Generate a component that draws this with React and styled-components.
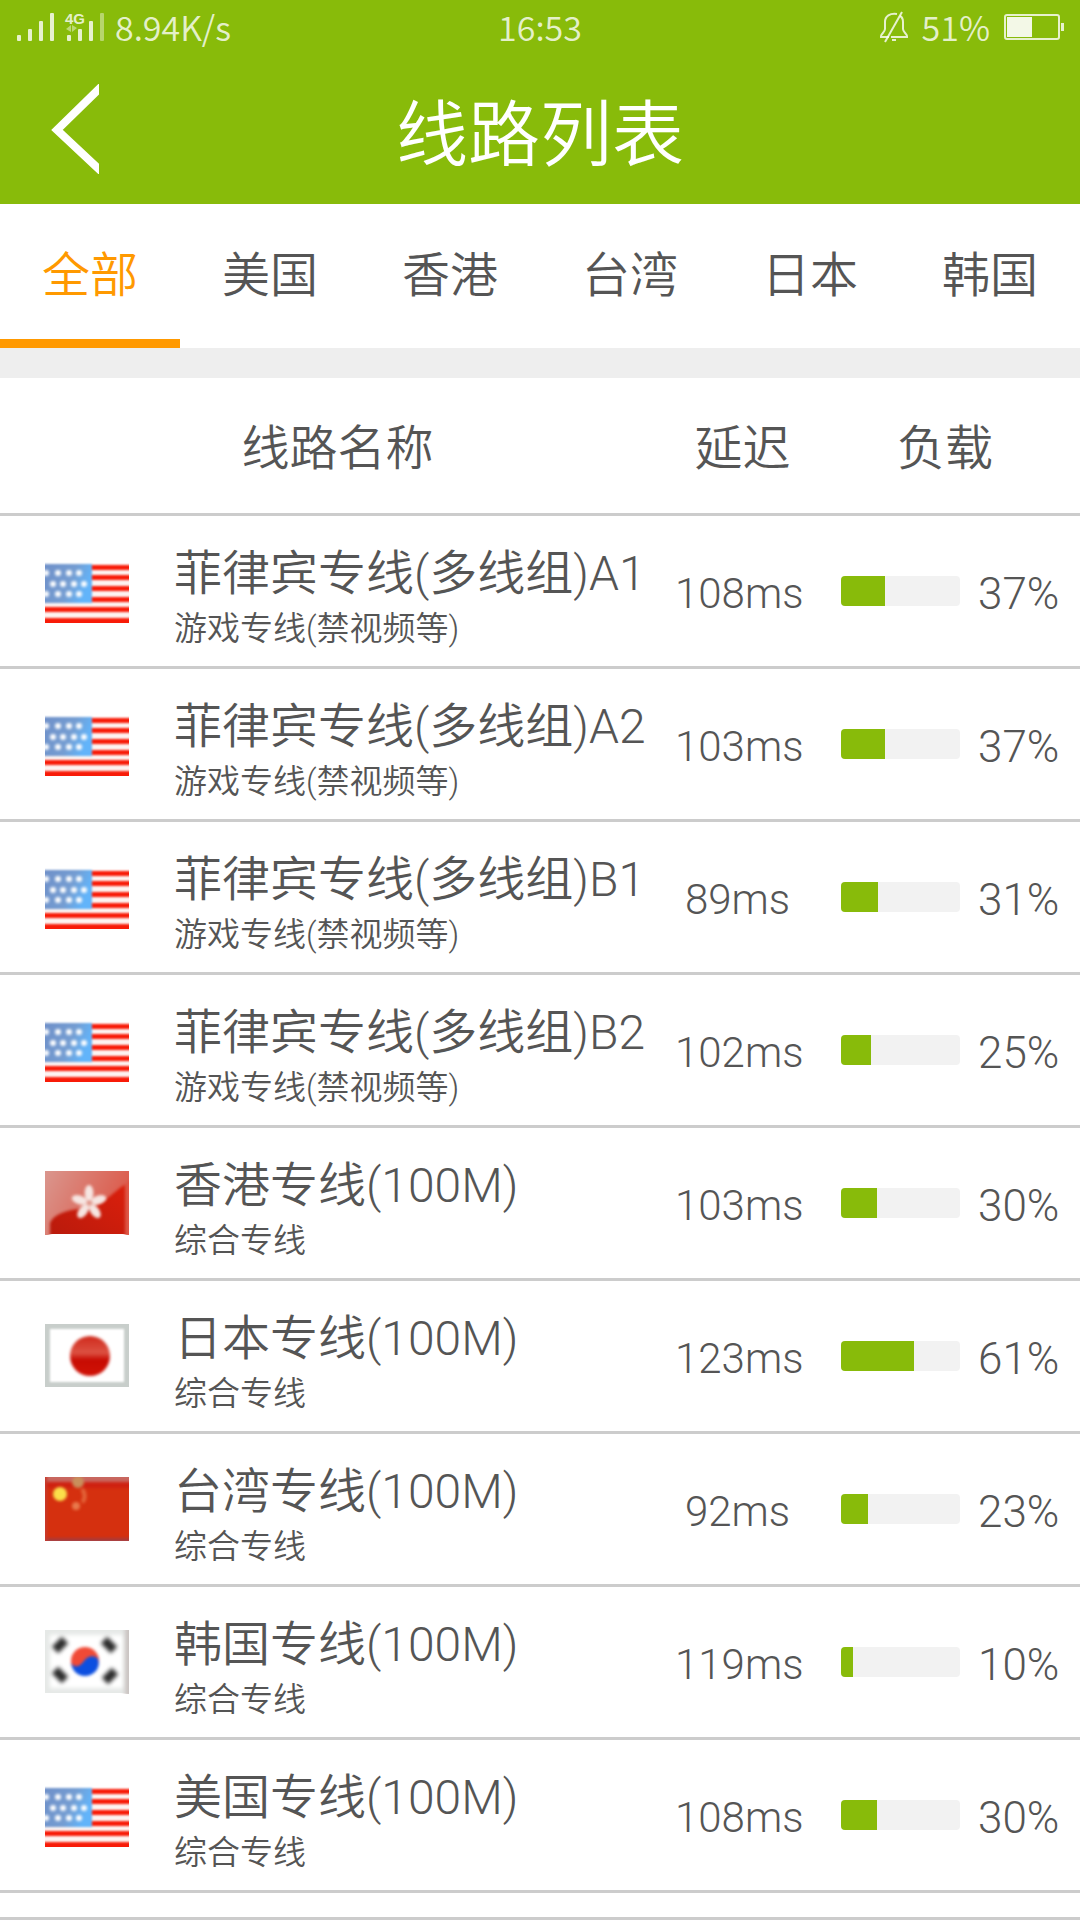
import React, { useId, useState } from "react"
import styled, { createGlobalStyle } from "styled-components"

const latin = `Roboto, "Noto Sans CJK SC", sans-serif`

const GlobalStyle = createGlobalStyle`
  * {
    box-sizing: border-box;
  }
  body {
    margin: 0;
    background: #fff;
    color: #555;
    font-family: "Noto Sans CJK SC", "Noto Sans", sans-serif;
    font-weight: 350;
  }
  button {
    font: inherit;
    color: inherit;
    background: none;
    border: 0;
    padding: 0;
    cursor: pointer;
  }
`

const Header = styled.header`
  background: #88bb0a;
  color: #fff;
`

const StatusBar = styled.div`
  display: grid;
  grid-template-columns: 1fr auto 1fr;
  align-items: center;
  height: 54px;
  padding: 0 16px;
  font-size: 34px;
  line-height: 54px;
  color: rgba(255, 255, 255, 0.8);
`

const StatusGroup = styled.div`
  display: flex;
  align-items: center;
  gap: ${(props) => props.gap};
  justify-content: ${(props) => props.end ? 'flex-end' : 'flex-start'};
`

const TitleBar = styled.div`
  display: grid;
  grid-template-columns: 150px 1fr 150px;
  align-items: center;
  height: 150px;
`

const BackButton = styled.button`
  display: flex;
  align-items: center;
  height: 150px;
  padding-left: 51px;
`

const PageTitle = styled.h1`
  margin: 0;
  font-size: 72px;
  line-height: 148px;
  font-weight: 350;
  text-align: center;
`

const Tabs = styled.nav`
  display: flex;
  border-bottom: 30px solid #eee;
`

const Tab = styled.button`
  flex: 1;
  height: 144px;
  padding-bottom: 2px;
  font-size: 48px;
  line-height: 72px;
  color: ${(props) => props.$active ? '#ff9900' : '#555'};
  border-bottom: 9px solid ${(props) => props.$active ? '#ff9900' : 'transparent'};
`

const LineTable = styled.table`
  width: 100%;
  table-layout: fixed;
  border-collapse: separate;
  border-spacing: 0;
`

const HeadCell = styled.th`
  width: ${(props) => props.width};
  height: 138px;
  padding: 0 0 4px;
  border-bottom: 3px solid #ccc;
  font-size: 48px;
  line-height: 72px;
  font-weight: 350;
`

const Cell = styled.td`
  height: 153px;
  padding: 0;
  border-bottom: 3px solid #ccc;
  font-family: ${latin};
`

const LineInfo = styled.div`
  display: flex;
  align-items: center;
  gap: 45px;
  padding-left: 45px;
  white-space: nowrap;
`

const LineText = styled.div`
  padding-top: 16px;
`

const LineName = styled.div`
  font-size: 48px;
  line-height: 60px;
`

const LineNote = styled.div`
  font-size: 33px;
  line-height: 50px;
`

const Latency = styled.div`
  padding: 6px 10px 0 0;
  font-size: 42px;
  line-height: 60px;
  text-align: center;
`

const Load = styled.div`
  display: flex;
  align-items: center;
  gap: 18px;
  padding-left: 31px;
`

const LoadValue = styled.span`
  padding-top: 6px;
  font-size: 44px;
  line-height: 60px;
`

const Track = styled.div`
  width: 119px;
  height: 30px;
  border-radius: 4px;
  background: #f2f2f2;
  overflow: hidden;
`

const Fill = styled.div`
  height: 100%;
  background: #88bb0a;
`

const ListEnd = styled.div`
  height: 27px;
  border-bottom: 3px solid #ccc;
`

const FlagSvg = styled.svg`
  display: block;
  flex: none;
`

const Soft = styled.g`
  filter: blur(${(props) => props.$radius || '1px'});
`

const Flag = ({ label, children }) => (
  <FlagSvg width="84" height="64" viewBox="0 0 84 64" role="img" aria-label={label}>
    {children}
  </FlagSvg>
)

const UsFlag = () => {
  const id = useId()
  const stars = [
    [1, 14], [13, 14], [24, 14], [34, 14],
    [8, 25], [18, 25], [29, 25], [39, 25],
    [1, 35], [13, 35], [24, 35], [34, 35],
  ]
  return (
    <Flag label="US">
      <defs>
        <linearGradient id={id} x1="0" x2="1" y1="0" y2="0.3">
          <stop offset="0" stopColor="#6f8fc8" />
          <stop offset="0.65" stopColor="#749dd2" />
          <stop offset="1" stopColor="#62b4fa" />
        </linearGradient>
      </defs>
      <Soft>
        <rect x="-4" y="5" width="92" height="64" fill="#fdf3f1" />
        {[9, 19, 30, 41, 51, 62].map((y) => (
          <rect key={y} x="-4" y={y - 3} width="92" height="5" fill="#f81b08" />
        ))}
        <rect x="-4" y="62" width="92" height="6" fill="#f81b08" />
        <rect x="-4" y="5" width="51" height="39" fill={`url(#${id})`} />
      </Soft>
      <Soft $radius="1.5px">
        {stars.map(([x, y]) => <circle key={`${x}-${y}`} cx={x} cy={y} r="3" fill="#fff" />)}
      </Soft>
    </Flag>
  )
}

const HkFlag = () => (
  <Flag label="HK">
    <defs>
      <linearGradient id="hk-base" x1="0" x2="1" y1="1" y2="0">
        <stop offset="0" stopColor="#b81a0c" />
        <stop offset="1" stopColor="#e0200c" />
      </linearGradient>
      <linearGradient id="hk-shine" x1="0" x2="1" y1="0" y2="0.4">
        <stop offset="0" stopColor="#d99a92" />
        <stop offset="1" stopColor="#dc5646" />
      </linearGradient>
    </defs>
    <rect width="84" height="63" fill="url(#hk-base)" />
    <Soft $radius="1.5px">
      <path d="M-4-4H88V10C70 16 62 34 40 37C20 39 8 44 5 52V68H-4Z" fill="url(#hk-shine)" />
      <rect x="80" y="12" width="8" height="56" fill="#dd5747" />
    </Soft>
    <Soft $radius="1.6px">
      {[0, 72, 144, 216, 288].map((angle) => (
        <ellipse key={angle} cx="44" cy="22" rx="4.4" ry="8" fill="#f6e6e2" transform={`rotate(${angle} 44 32)`} />
      ))}
      <circle cx="45" cy="32" r="2.5" fill="#e0988c" />
    </Soft>
  </Flag>
)

const JpFlag = () => (
  <Flag label="JP">
    <defs>
      <linearGradient id="jp-sun" x1="0" x2="0" y1="0" y2="1">
        <stop offset="0" stopColor="#cf2a1c" />
        <stop offset="0.42" stopColor="#dc5142" />
        <stop offset="0.6" stopColor="#c70b02" />
        <stop offset="1" stopColor="#d01206" />
      </linearGradient>
    </defs>
    <rect width="84" height="63" fill="#c8cecb" />
    <Soft>
      <rect x="5" y="5" width="74" height="53" fill="#fff" />
    </Soft>
    <Soft $radius="1.6px">
      <circle cx="45" cy="32" r="20" fill="url(#jp-sun)" />
    </Soft>
  </Flag>
)

const CnFlag = () => (
  <Flag label="CN">
    <rect width="84" height="63" fill="#d5300f" />
    <Soft $radius="1.6px">
      <rect x="-4" y="-4" width="92" height="9" fill="#c8675f" />
      <rect x="-4" y="5" width="92" height="6" fill="#cf2110" />
      <rect x="-4" y="61" width="92" height="6" fill="#a83a3a" />
      <rect x="-4" y="-4" width="6" height="72" fill="#c63a2c" />
      <circle cx="33" cy="5" r="6" fill="#c98f5c" />
      <path d="M37 12C41 17 40 23 37 25" stroke="#e3653a" strokeWidth="4" fill="none" />
      <circle cx="31" cy="29" r="4" fill="#e87a4c" />
      <circle cx="15" cy="17" r="7" fill="#fbe04a" />
    </Soft>
  </Flag>
)

const KrFlag = () => (
  <Flag label="KR">
    <rect width="84" height="63" fill="#e6e9e7" />
    <Soft $radius="2px">
      <rect x="5" y="5" width="73" height="53" fill="#fff" />
      <rect x="80" y="-4" width="8" height="72" fill="#c9c2c0" />
    </Soft>
    <Soft $radius="2px">
      <g stroke="#2c2c2c" strokeWidth="9" fill="none">
        <path d="M10 20L20 10" />
        <path d="M59 10L69 20" />
        <path d="M10 40L20 50" />
        <path d="M60 51L70 41" />
      </g>
    </Soft>
    <Soft $radius="1.4px">
      <circle cx="40" cy="31" r="14" fill="#f04a36" />
      <path d="M26 33C30 39 36 36 39 31C43 25 50 25 53 29C56 38 49 46 40 46C32 46 27 40 26 33Z" fill="#0c4fe0" />
    </Soft>
  </Flag>
)

const flags = { us: UsFlag, hk: HkFlag, jp: JpFlag, cn: CnFlag, kr: KrFlag }

const SignalIcon = () => (
  <svg width="90" height="38" viewBox="16 8 90 38" fill="currentColor" aria-hidden="true">
    <rect x="17" y="35" width="4" height="6" rx="1" />
    <rect x="28" y="29" width="4" height="12" rx="1" />
    <rect x="39" y="21" width="4" height="20" rx="1" />
    <rect x="50" y="13" width="4" height="28" rx="1" />
    <rect x="67" y="35" width="4" height="6" rx="1" />
    <rect x="78" y="29" width="4" height="12" rx="1" />
    <rect x="89" y="21" width="4" height="20" rx="1" />
    <rect x="100" y="13" width="4" height="28" rx="1" opacity="0.5" />
    <path d="M71 25V32L66 29ZM72 25V32L77 28Z" opacity="0.55" />
    <text x="65" y="24" fontFamily="Liberation Sans, sans-serif" fontSize="15" fontWeight="700">4G</text>
  </svg>
)

const MutedBellIcon = () => (
  <svg width="28" height="32" viewBox="0 0 28 32" fill="none" stroke="currentColor" strokeWidth="2" aria-hidden="true">
    <path d="M17 3C10 2 5 5 5 11V18C5 21 1 23 1 25V26H9M11 26H27V25C27 23 23 21 23 18V11C23 8 22 6 20 5" />
    <path d="M22 1L5 31" />
    <path d="M12 29H16" />
  </svg>
)

const BatteryIcon = () => (
  <svg width="60" height="26" viewBox="0 0 60 26" aria-hidden="true">
    <rect x="1" y="1" width="54" height="24" rx="2" fill="none" stroke="currentColor" strokeWidth="2" />
    <rect x="3" y="3" width="25" height="20" fill="#fff" opacity="0.9" />
    <rect x="57" y="9" width="3" height="8" fill="currentColor" />
  </svg>
)

const BackIcon = () => (
  <svg width="48" height="90" viewBox="0 0 48 90" fill="none" stroke="#fff" strokeWidth="8" aria-hidden="true">
    <path d="M52 1L6 46L52 89" />
  </svg>
)

const regions = ["全部", "美国", "香港", "台湾", "日本", "韩国"]

const lines = [
  { flag: "us", name: "菲律宾专线(多线组)A1", note: "游戏专线(禁视频等)", latency: 108, load: 37 },
  { flag: "us", name: "菲律宾专线(多线组)A2", note: "游戏专线(禁视频等)", latency: 103, load: 37 },
  { flag: "us", name: "菲律宾专线(多线组)B1", note: "游戏专线(禁视频等)", latency: 89, load: 31 },
  { flag: "us", name: "菲律宾专线(多线组)B2", note: "游戏专线(禁视频等)", latency: 102, load: 25 },
  { flag: "hk", name: "香港专线(100M)", note: "综合专线", latency: 103, load: 30 },
  { flag: "jp", name: "日本专线(100M)", note: "综合专线", latency: 123, load: 61 },
  { flag: "cn", name: "台湾专线(100M)", note: "综合专线", latency: 92, load: 23 },
  { flag: "kr", name: "韩国专线(100M)", note: "综合专线", latency: 119, load: 10 },
  { flag: "us", name: "美国专线(100M)", note: "综合专线", latency: 108, load: 30 },
]

const LineRow = ({ line }) => {
  const CountryFlag = flags[line.flag]
  return (
    <tr>
      <Cell>
        <LineInfo>
          <CountryFlag />
          <LineText>
            <LineName>{line.name}</LineName>
            <LineNote>{line.note}</LineNote>
          </LineText>
        </LineInfo>
      </Cell>
      <Cell>
        <Latency>{line.latency}ms</Latency>
      </Cell>
      <Cell>
        <Load>
          <Track>
            <Fill style={{ width: `${line.load}%` }} />
          </Track>
          <LoadValue>{line.load}%</LoadValue>
        </Load>
      </Cell>
    </tr>
  )
}

const App = () => {
  const [region, setRegion] = useState("全部")

  return (
    <>
      <GlobalStyle />
      <Header>
        <StatusBar>
          <StatusGroup gap="9px">
            <SignalIcon />
            <span>8.94K/s</span>
          </StatusGroup>
          <span>16:53</span>
          <StatusGroup gap="14px" end>
            <MutedBellIcon />
            <span>51%</span>
            <BatteryIcon />
          </StatusGroup>
        </StatusBar>
        <TitleBar>
          <BackButton type="button" aria-label="返回">
            <BackIcon />
          </BackButton>
          <PageTitle>线路列表</PageTitle>
        </TitleBar>
      </Header>
      <Tabs>
        {regions.map((name) => (
          <Tab key={name} type="button" $active={name === region} onClick={() => setRegion(name)}>
            {name}
          </Tab>
        ))}
      </Tabs>
      <LineTable>
        <thead>
          <tr>
            <HeadCell width="62.5%">线路名称</HeadCell>
            <HeadCell width="12.5%">延迟</HeadCell>
            <HeadCell width="25%">负载</HeadCell>
          </tr>
        </thead>
        <tbody>
          {lines.map((line) => <LineRow key={line.name} line={line} />)}
        </tbody>
      </LineTable>
      <ListEnd />
    </>
  )
}

export default App
